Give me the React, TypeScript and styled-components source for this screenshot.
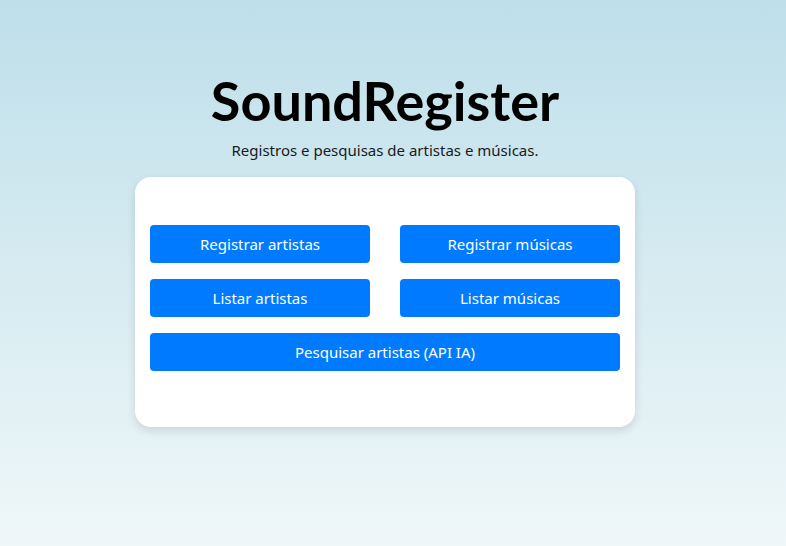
import styled, { createGlobalStyle } from "styled-components"

const GlobalStyle = createGlobalStyle`
  html, body {
    margin: 0;
    padding: 0;
    height: 100%;
  }
  body {
    font-family: "Noto Sans", "Open Sans", sans-serif;
    background: linear-gradient(180deg, #bedfea 0%, #eff7f9 100%);
    background-attachment: fixed;
    min-height: 546px;
  }
`

const buttons = [
  { label: "Registrar artistas" },
  { label: "Registrar músicas" },
  { label: "Listar artistas" },
  { label: "Listar músicas" },
  { label: "Pesquisar artistas (API IA)", wide: true },
]

export default function App() {
  return (
    <>
      <GlobalStyle />
      <Page>
        <Title>SoundRegister</Title>
        <Subtitle>Registros e pesquisas de artistas e músicas.</Subtitle>
        <Card>
          <ButtonGrid>
            {buttons.map(b => (
              <MenuButton key={b.label} $wide={b.wide}>{b.label}</MenuButton>
            ))}
          </ButtonGrid>
        </Card>
      </Page>
    </>
  )
}

const Page = styled.div`
  min-height: 546px;
  box-sizing: border-box;
  padding: 70px 16px 0 0;
  display: flex;
  flex-direction: column;
  align-items: center;
`

const Title = styled.h1`
  margin: 0;
  font-family: "Lato", "Noto Sans", sans-serif;
  font-weight: 700;
  font-size: 54px;
  line-height: 62px;
  color: #000;
`

const Subtitle = styled.p`
  margin: 8px 0 0;
  font-size: 15px;
  line-height: 20px;
  color: #1a1a1a;
`

const Card = styled.div`
  margin-top: 17px;
  width: 500px;
  height: 250px;
  box-sizing: border-box;
  padding: 48px 15px 0;
  background-color: #fff;
  border-radius: 16px;
  box-shadow: 0 4px 10px rgba(0, 0, 0, 0.12);
`

const ButtonGrid = styled.div`
  display: grid;
  grid-template-columns: 1fr 1fr;
  column-gap: 30px;
  row-gap: 16px;
`

const MenuButton = styled.button<{ $wide?: boolean }>`
  grid-column: ${p => (p.$wide ? "1 / span 2" : "auto")};
  height: 38px;
  border: 0;
  border-radius: 4px;
  background-color: #007bff;
  color: #fff;
  font-family: "Noto Sans", "Open Sans", sans-serif;
  font-size: 15px;
  cursor: pointer;

  &:hover {
    background-color: #0069d9;
  }
`
